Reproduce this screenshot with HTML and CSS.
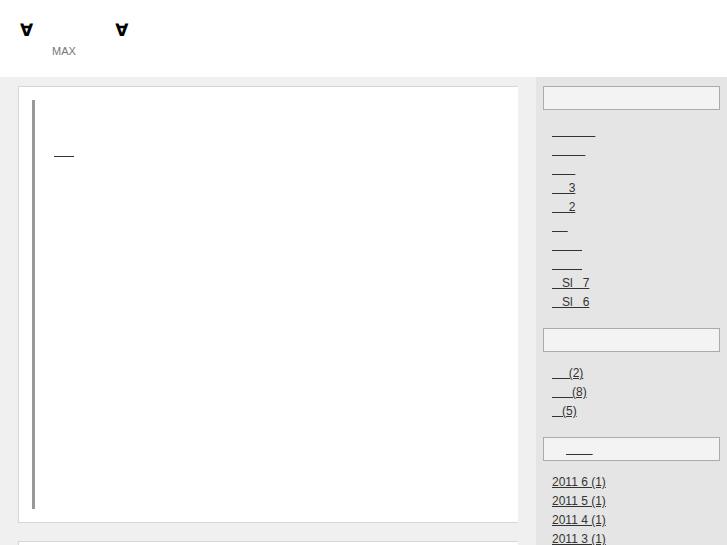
FILE: index.html
```html
<!DOCTYPE html>
<html lang="ja">
<head>
    <meta charset="UTF-8">
    <meta name="viewport" content="width=device-width, initial-scale=1.0">
    <title>MAX</title>
    <link rel="stylesheet" href="styles.css">
</head>
<body>
    <header class="site-header">
        <h1 class="site-title">∀<span class="title-gap"></span>∀</h1>
        <p class="site-desc">MAX</p>
    </header>

    <div class="wrapper">
        <main class="main-col">
            <article class="entry">
                <blockquote class="entry-quote">
                    <p><a href="#">&nbsp;&nbsp;&nbsp;&nbsp;&nbsp;&nbsp;</a></p>
                </blockquote>
            </article>
            <article class="entry entry-next"></article>
        </main>

        <aside class="sidebar">
            <div class="widget">
                <h3 class="widget-title"></h3>
                <ul class="widget-list">
                    <li><a href="#">&nbsp;&nbsp;&nbsp;&nbsp;&nbsp;&nbsp;&nbsp;&nbsp;&nbsp;&nbsp;&nbsp;&nbsp;&nbsp;</a></li>
                    <li><a href="#">&nbsp;&nbsp;&nbsp;&nbsp;&nbsp;&nbsp;&nbsp;&nbsp;&nbsp;&nbsp;</a></li>
                    <li><a href="#">&nbsp;&nbsp;&nbsp;&nbsp;&nbsp;&nbsp;&nbsp;</a></li>
                    <li><a href="#">&nbsp;&nbsp;&nbsp;&nbsp;&nbsp;3</a></li>
                    <li><a href="#">&nbsp;&nbsp;&nbsp;&nbsp;&nbsp;2</a></li>
                    <li><a href="#">&nbsp;&nbsp;&nbsp;&nbsp;&#8201;</a></li>
                    <li><a href="#">&nbsp;&nbsp;&nbsp;&nbsp;&nbsp;&nbsp;&nbsp;&nbsp;&nbsp;</a></li>
                    <li><a href="#">&nbsp;&nbsp;&nbsp;&nbsp;&nbsp;&nbsp;&nbsp;&nbsp;&nbsp;</a></li>
                    <li><a href="#">&nbsp;&nbsp;&nbsp;Sl&nbsp;&nbsp;&nbsp;7</a></li>
                    <li><a href="#">&nbsp;&nbsp;&nbsp;Sl&nbsp;&nbsp;&nbsp;6</a></li>
                </ul>
            </div>

            <div class="widget">
                <h3 class="widget-title"></h3>
                <ul class="widget-list">
                    <li><a href="#">&nbsp;&nbsp;&nbsp;&nbsp;&nbsp;(2)</a></li>
                    <li><a href="#">&nbsp;&nbsp;&nbsp;&nbsp;&nbsp;&nbsp;(8)</a></li>
                    <li><a href="#">&nbsp;&nbsp;&nbsp;(5)</a></li>
                </ul>
            </div>

            <div class="widget">
                <h3 class="widget-title"><a href="#">&nbsp;&nbsp;&nbsp;&nbsp;&nbsp;&nbsp;&nbsp;&nbsp;</a></h3>
                <ul class="widget-list">
                    <li><a href="#">2011&nbsp;6&nbsp;(1)</a></li>
                    <li><a href="#">2011&nbsp;5&nbsp;(1)</a></li>
                    <li><a href="#">2011&nbsp;4&nbsp;(1)</a></li>
                    <li><a href="#">2011&nbsp;3&nbsp;(1)</a></li>
                </ul>
            </div>
        </aside>
    </div>
</body>
</html>
```

FILE: styles.css
```css
:root {
    --page-bg: #f0f0f0;
    --side-bg: #e5e5e5;
    --box-border: #d6d6d6;
    --title-border: #ababab;
    --link-color: #333;
}

* {
    margin: 0;
    padding: 0;
    box-sizing: border-box;
}

body {
    font-family: 'Liberation Sans', Arial, sans-serif;
    font-size: 12px;
    color: var(--link-color);
    background-color: var(--page-bg);
    overflow: hidden;
}

a {
    color: var(--link-color);
    text-decoration: underline;
}

/* header */
.site-header {
    height: 77px;
    background-color: #fff;
    padding: 20px 0 0 20px;
}

.site-title {
    font-family: 'DejaVu Sans', sans-serif;
    font-size: 17px;
    font-weight: bold;
    line-height: 20px;
    color: #000;
}

.title-gap {
    display: inline-block;
    width: 82px;
}

.site-desc {
    margin: 5px 0 0 32px;
    font-size: 11px;
    line-height: 13px;
    color: #777;
}

/* layout */
.wrapper {
    display: flex;
    height: 468px;
}

.main-col {
    width: 536px;
    padding: 9px 18px 0 18px;
}

.entry {
    background-color: #fff;
    border: 1px solid var(--box-border);
    border-right: none;
    padding: 13px;
    margin-bottom: 18px;
}

.entry-quote {
    height: 409px;
    border-left: 3px solid #999;
    padding: 42px 0 0 19px;
}

.entry-quote p {
    line-height: 19px;
}

.entry-next {
    height: 60px;
}

/* sidebar */
.sidebar {
    flex: 1;
    background-color: var(--side-bg);
    padding: 9px 7px 0 7px;
}

.widget-title {
    height: 24px;
    border: 1px solid var(--title-border);
    background-color: #f3f3f3;
    font-size: 12px;
    font-weight: normal;
    line-height: 22px;
    padding-left: 22px;
}

.widget-list {
    list-style: none;
    padding-left: 9px;
    margin: 12px 0 16px;
}

.widget-list li {
    line-height: 19px;
}
```
